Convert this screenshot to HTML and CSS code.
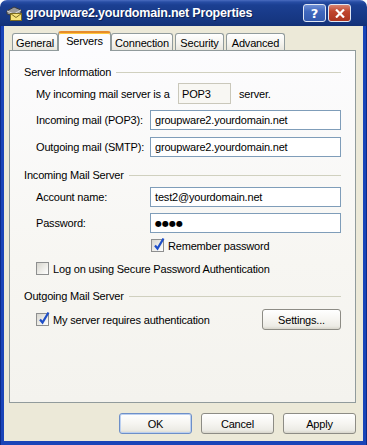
FILE: index.html
```html
<!DOCTYPE html>
<html>
<head>
<meta charset="utf-8">
<link rel="stylesheet" href="styles.css">
</head>
<body>
<div class="window">
  <div class="titlebar">
    <svg class="appicon" width="18" height="17" viewBox="0 0 18 17">
      <path d="M2 6 L9 2 L16 5 L16 8 L9 11 L2 9 Z" fill="#9a9a9a" stroke="#3a3a3a" stroke-width="1"/>
      <path d="M2 6 L9 9 L16 5" fill="none" stroke="#d8d8d8" stroke-width="1"/>
      <rect x="5.5" y="8.5" width="11" height="7" fill="#f6e27a" stroke="#7a6a20" stroke-width="1"/>
      <path d="M5.5 8.5 L11 12.5 L16.5 8.5" fill="none" stroke="#7a6a20" stroke-width="1"/>
    </svg>
    <span class="title">groupware2.yourdomain.net Properties</span>
    <div class="capbtns">
      <span class="capbtn help">?</span>
      <span class="capbtn close"><svg width="10" height="9" viewBox="0 0 10 9"><path d="M1 0.5 L9 8.5 M9 0.5 L1 8.5" stroke="#fff" stroke-width="2.2"/></svg></span>
    </div>
  </div>
  <div class="frame">
    <div class="tabs">
      <div class="tab t-general">General</div>
      <div class="tab t-servers active">Servers</div>
      <div class="tab t-connection">Connection</div>
      <div class="tab t-security">Security</div>
      <div class="tab t-advanced">Advanced</div>
    </div>
    <div class="panel">
      <div class="group-title gt1"><span>Server Information</span><i class="rule"></i></div>
      <div class="row r-type">
        <span class="lbl">My incoming mail server is a</span>
        <span class="ro">POP3</span>
        <span class="after">server.</span>
      </div>
      <div class="row r-in">
        <span class="lbl wide">Incoming mail (POP3):</span>
        <span class="input">groupware2.yourdomain.net</span>
      </div>
      <div class="row r-out">
        <span class="lbl wide">Outgoing mail (SMTP):</span>
        <span class="input">groupware2.yourdomain.net</span>
      </div>

      <div class="group-title gt2"><span>Incoming Mail Server</span><i class="rule"></i></div>
      <div class="row r-acc">
        <span class="lbl wide">Account name:</span>
        <span class="input">test2@yourdomain.net</span>
      </div>
      <div class="row r-pw">
        <span class="lbl wide">Password:</span>
        <span class="input pw">&#9679;&#9679;&#9679;&#9679;</span>
      </div>
      <div class="row r-rem">
        <span class="check checked"><svg width="13" height="15" viewBox="0 0 13 15"><path d="M3 8.5 L5.5 11.5 L11.5 1.5" fill="none" stroke="#1f4fc8" stroke-width="2.2"/></svg></span>
        <span class="cblabel">Remember password</span>
      </div>
      <div class="row r-spa">
        <span class="check"></span>
        <span class="cblabel">Log on using Secure Password Authentication</span>
      </div>

      <div class="group-title gt3"><span>Outgoing Mail Server</span><i class="rule"></i></div>
      <div class="row r-auth">
        <span class="check checked"><svg width="13" height="15" viewBox="0 0 13 15"><path d="M3 8.5 L5.5 11.5 L11.5 1.5" fill="none" stroke="#1f4fc8" stroke-width="2.2"/></svg></span>
        <span class="cblabel grow">My server requires authentication</span>
        <span class="btn settings">Settings...</span>
      </div>
    </div>
    <div class="buttons">
      <span class="btn default">OK</span>
      <span class="btn">Cancel</span>
      <span class="btn">Apply</span>
    </div>
  </div>
</div>
</body>
</html>
```

FILE: styles.css
```css
html, body {
  margin: 0;
  padding: 0;
  background: #ffffff;
}
body {
  font-family: "Liberation Sans", Arial, sans-serif;
  font-size: 11px;
  letter-spacing: -0.18px;
  color: #000;
}
.window {
  width: 367px;
  height: 445px;
  display: flex;
  flex-direction: column;
}
.titlebar {
  height: 26px;
  flex: none;
  display: flex;
  align-items: center;
  border-radius: 7px 7px 0 0;
  background: linear-gradient(to bottom, #4a6cc0 0px, #274da4 2px, #1b3f92 5px, #183a88 14px, #15357f 22px, #123076 26px);
  padding: 0 5px 0 5px;
  box-sizing: border-box;
}
.appicon {
  flex: none;
  margin-top: 1px;
}
.title {
  flex: 1;
  margin-left: 3px;
  color: #fff;
  font-family: "Liberation Sans", Arial, sans-serif;
  font-weight: bold;
  font-size: 12.5px;
  letter-spacing: -0.2px;
  text-shadow: 1px 1px 0 #0a1f55;
  white-space: nowrap;
}
.capbtns {
  display: flex;
  gap: 2px;
  margin-right: 11px;
}
.capbtn {
  width: 23px;
  height: 18px;
  box-sizing: border-box;
  border: 1px solid #dfe6f4;
  border-radius: 3px;
  display: flex;
  align-items: center;
  justify-content: center;
  color: #fff;
  font-weight: bold;
  font-size: 13px;
  letter-spacing: 0;
  font-family: "DejaVu Sans", sans-serif;
}
.help {
  background: linear-gradient(to bottom, #6f8fd4 0%, #4068be 40%, #335aae 100%);
}
.close {
  background: linear-gradient(to bottom, #d98472 0%, #c0462e 40%, #ab3520 100%);
}
.frame {
  flex: 1;
  display: flex;
  flex-direction: column;
  background: #ece9d8;
  border: 4px solid #1a44b8;
  border-top: none;
  padding: 5px 7px 7px 5px;
  position: relative;
}
.frame::before {
  content: "";
  position: absolute;
  left: -4px;
  top: 0;
  bottom: -4px;
  width: 1px;
  background: #0b2a8a;
}
.frame::after {
  content: "";
  position: absolute;
  right: -4px;
  top: 0;
  bottom: -4px;
  width: 1px;
  background: #0b2a8a;
}
.tabs {
  height: 19px;
  display: flex;
  align-items: flex-end;
  padding-left: 3px;
  position: relative;
  z-index: 2;
}
.tab {
  height: 17px;
  box-sizing: border-box;
  border: 1px solid #919b9c;
  border-bottom: none;
  border-radius: 3px 3px 0 0;
  background: linear-gradient(to bottom, #ffffff 0%, #f4f3ee 60%, #e8e6dd 100%);
  display: flex;
  align-items: center;
  justify-content: center;
  padding-top: 1px;
}
.t-general { width: 46px; }
.t-servers { width: 53px; }
.t-connection { width: 62px; }
.t-security { width: 49px; margin-left: 2px; }
.t-advanced { width: 59px; margin-left: 2px; }
.tab.active {
  height: 20px;
  margin-bottom: -1px;
  background: #fcfcfe;
  border-top: 2px solid #e68b2c;
  box-shadow: inset 0 1px 0 #ffc73c;
  padding-bottom: 3px;
}
.panel {
  flex: 1;
  border: 1px solid #919b9c;
  background: linear-gradient(to bottom, #fcfcfe 0%, #f7f6f2 60%, #f4f3ee 100%);
  display: flex;
  flex-direction: column;
  padding: 0 14px 0 14px;
  box-sizing: border-box;
}
.group-title {
  display: flex;
  align-items: center;
  height: 13px;
}
.group-title span {
  white-space: nowrap;
  padding-right: 5px;
}
.group-title .rule {
  flex: 1;
  height: 1px;
  background: #d0d0bf;
  margin-top: 1px;
}
.gt1 { margin-top: 14px; }
.gt2 { margin-top: 11px; }
.gt3 { margin-top: 14px; }
.row {
  display: flex;
  align-items: center;
  padding-left: 12px;
}
.lbl {
  white-space: nowrap;
}
.lbl.wide {
  width: 114px;
}
.r-type {
  height: 21px;
  margin-top: 5px;
}
.r-type .lbl {
  width: 142px;
}
.ro {
  width: 53px;
  height: 21px;
  box-sizing: border-box;
  border: 1px solid #cac8bb;
  background: #f8f7f3;
  display: flex;
  align-items: center;
  padding-left: 3px;
}
.after {
  margin-left: 8px;
}
.input {
  flex: 1;
  height: 20px;
  box-sizing: border-box;
  border: 1px solid #7f9db9;
  background: #fff;
  display: flex;
  align-items: center;
  padding-left: 4px;
}
.input.pw {
  font-family: "DejaVu Sans", sans-serif;
  font-size: 8px;
  letter-spacing: 0px;
  padding-top: 1px;
}
.r-in { margin-top: 6px; }
.r-out { margin-top: 7px; }
.r-acc { margin-top: 6px; }
.r-pw { margin-top: 6px; }
.r-rem {
  margin-top: 6px;
  padding-left: 127px;
  height: 13px;
}
.r-spa {
  margin-top: 10px;
  height: 13px;
}
.r-auth {
  margin-top: 7px;
  height: 21px;
}
.check {
  width: 13px;
  height: 13px;
  box-sizing: border-box;
  border: 1px solid #8e8f8f;
  background: linear-gradient(135deg, #d6d5ce 0%, #ecebe6 50%, #ffffff 100%);
  position: relative;
  flex: none;
}
.check svg {
  position: absolute;
  left: 0;
  top: -3px;
}
.cblabel {
  margin-left: 4px;
  white-space: nowrap;
}
.grow {
  flex: 1;
}
.btn {
  width: 73px;
  height: 21px;
  box-sizing: border-box;
  border: 1px solid #8d8c85;
  border-radius: 3px;
  background: linear-gradient(to bottom, #ffffff 0%, #f6f5f1 50%, #ecebe5 85%, #d8d6cc 100%);
  display: flex;
  align-items: center;
  justify-content: center;
}
.settings {
  width: 79px;
}
.btn.default {
  border-color: #6d8fc8;
  box-shadow: inset 0 0 0 1px #bcd0f0;
}
.buttons {
  display: flex;
  justify-content: flex-end;
  gap: 9px;
  margin-top: 10px;
}
```
